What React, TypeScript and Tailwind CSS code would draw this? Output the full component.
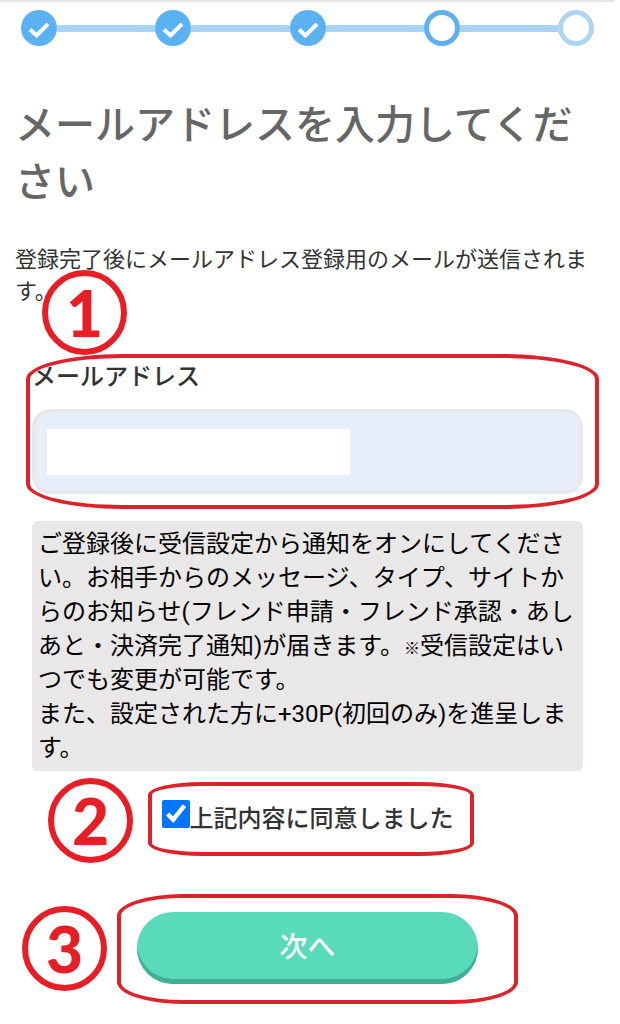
import { Check } from 'lucide-react'

type StepState = 'done' | 'current' | 'todo'

const STEPS: StepState[] = ['done', 'done', 'done', 'current', 'todo']

export default function App() {
  return (
    <main lang="ja" className="bg-white pr-[5px] pb-10 font-['Roboto','Noto_Sans_CJK_JP',sans-serif] text-[#333333]">
      <div className="border-t-2 border-[#e3e5ec] px-[21px] pt-2">
        <Stepper />
      </div>

      <header className="mt-[51px] px-[15px]">
        <h1 className="text-[40px] leading-[57px] font-medium text-[#666666]">メールアドレスを入力してください</h1>
        <p className="mt-[33px] text-[22px] leading-8">登録完了後にメールアドレス登録用のメールが送信されます。</p>
      </header>

      <form className="mt-[52px] px-8" onSubmit={(e) => e.preventDefault()}>
        <div className="relative">
          <label htmlFor="email" className="block text-[24px] leading-[34px] font-medium">
            メールアドレス
          </label>
          <div className="relative mt-[15px]">
            <input
              id="email"
              type="email"
              className="block h-[85px] w-full rounded-[18px] border-4 border-[#e9e9eb] bg-[#e7effc] px-4 text-[24px] outline-none"
            />
            {/* hides the typed address */}
            <span className="absolute top-5 left-[15px] h-[46px] w-[55%] bg-white" />
          </div>
          <span className="pointer-events-none absolute -top-[6px] -right-4 -bottom-[15px] -left-[6px] rounded-[97px/25px] border-4 border-[#dc222b]" />
          <Marker n={1} className="-top-[90px] left-[10px]" />
        </div>

        <p className="mt-[27px] rounded-md bg-[#e9e7e8] p-[6px] text-[24px] leading-[34px] text-black">
          ご登録後に受信設定から通知をオンにしてください。お相手からのメッセージ、タイプ、サイトからのお知らせ(フレンド申請・フレンド承認・あしあと・決済完了通知)が届きます。
          <span className="text-[16px] leading-none">※</span>
          受信設定はいつでも変更が可能です。
          <br />
          また、設定された方に+30P(初回のみ)を進呈します。
        </p>

        <div className="relative mt-[29px] flex justify-center">
          <div className="relative flex items-start">
            <input id="agree" type="checkbox" defaultChecked className="h-7 w-7 accent-[#0075ff]" />
            <label htmlFor="agree" className="pt-[2px] text-[24px] leading-[34px] font-medium">
              上記内容に同意しました
            </label>
            <span className="pointer-events-none absolute -top-[18px] -right-5 -bottom-5 -left-[14px] rounded-[54px/13px] border-4 border-[#dc222b]" />
          </div>
          <Marker n={2} className="-top-[22px] left-4" />
        </div>

        <div className="relative mt-[76px] flex justify-center">
          <div className="relative w-[62%]">
            <button
              type="submit"
              className="block h-[72px] w-full rounded-full bg-[#58dabb] text-[28px] font-medium text-white shadow-[inset_0_-5px_0_#42ae95]"
            >
              次へ
            </button>
            <span className="pointer-events-none absolute -top-[18px] -right-10 -bottom-5 -left-5 rounded-[66px/22px] border-4 border-[#dc222b]" />
          </div>
          <Marker n={3} className="-top-[6px] -left-[10px]" />
        </div>
      </form>
    </main>
  )
}

function Stepper() {
  return (
    <ol className="flex items-center">
      {STEPS.map((state, i) => (
        <li key={i} className={i > 0 ? 'flex flex-1 items-center' : 'flex items-center'}>
          {i > 0 && <span className="h-[7px] flex-1 bg-[#a8d5f6]" />}
          <StepDot state={state} />
        </li>
      ))}
    </ol>
  )
}

function StepDot({ state }: { state: StepState }) {
  if (state === 'done') {
    return (
      <span className="flex h-9 w-9 items-center justify-center rounded-full bg-[#5ab2f3] text-white">
        <svg viewBox="0 0 36 36" className="h-9 w-9" fill="none" stroke="currentColor" strokeWidth="4" aria-hidden="true">
          <path d="M9 19.5 15.5 25.5 27 14" strokeLinejoin="miter" />
        </svg>
      </span>
    )
  }
  if (state === 'current') {
    return <span className="h-9 w-9 rounded-full border-[5px] border-[#5fb0ec] bg-white" />
  }
  return <span className="h-9 w-9 rounded-full border-[5px] border-[#aed4f1] bg-white" />
}

// Red numbered circle that points at a step of the form.
function Marker({ n, className }: { n: number; className: string }) {
  return (
    <span
      className={`pointer-events-none absolute flex h-[85px] w-[85px] items-center justify-center rounded-full border-[6px] border-[#e81e27] font-['Lato',sans-serif] text-[64px] leading-none font-black text-[#e81e27] ${className}`}
    >
      {n}
    </span>
  )
}
